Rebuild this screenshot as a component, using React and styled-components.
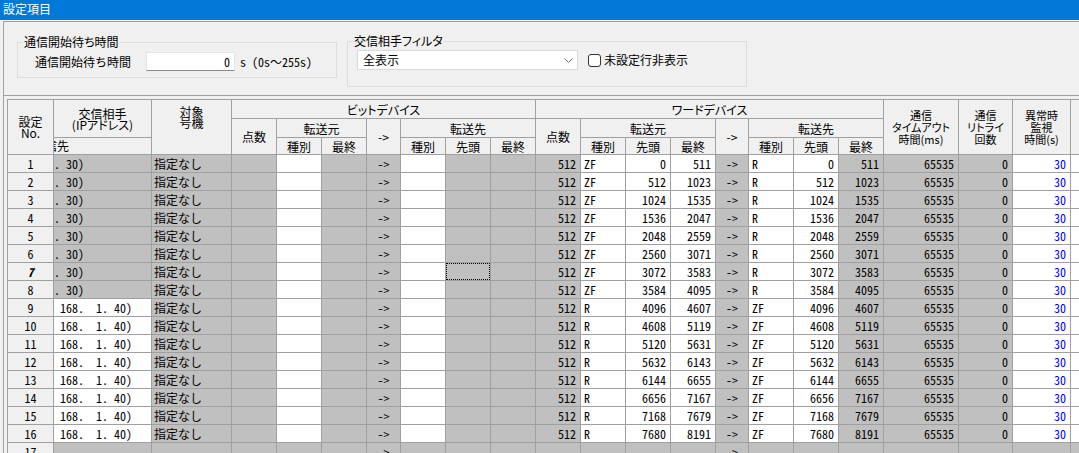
import React from "react";
import styled, { createGlobalStyle } from "styled-components";

const SANS = `"Noto Sans CJK JP", "Noto Sans", sans-serif`;
const MONO = `"Noto Sans Mono CJK JP", "Noto Sans CJK JP", monospace`;
const LINE = "#a0a0a0";
const GRAY = "#c0c0c0";
const FACE = "#f0f0f0";

const GlobalStyle = createGlobalStyle`
  html, body { margin: 0; padding: 0; overflow: hidden; background: ${FACE}; }
  body { font-family: ${SANS}; font-size: 12px; color: #000; }
  * { box-sizing: border-box; }
`;

const Window = styled.div`
  width: 1079px;
  height: 453px;
  overflow: hidden;
  background: ${FACE};
`;

const TitleBar = styled.div`
  height: 20px;
  background: #0078d7;
  color: #fff;
  font-size: 12px;
  line-height: 18px;
  padding-left: 3px;
`;

const Pane = styled.div`
  margin: 1px 0 0 3px;
  border-top: 1px solid ${LINE};
  border-left: 1px solid ${LINE};
`;

const Controls = styled.div`
  height: 73px;
  display: flex;
  align-items: flex-start;
  gap: 10px;
  padding: 12px 0 0 13px;
`;

const Group = styled.fieldset`
  margin: ${(p) => p.$mt || 0}px 0 0 0;
  padding: 0;
  width: ${(p) => p.$w}px;
  height: ${(p) => p.$h}px;
  border: 1px solid #dcdcdc;
  min-width: 0;
`;

const Legend = styled.legend`
  margin-left: 5px;
  padding: 0 1px;
  font-size: 12px;
  line-height: 14px;
  font-feature-settings: "palt";
`;

const FieldRow = styled.div`
  display: flex;
  align-items: center;
  margin: ${(p) => p.$mt}px 0 0 ${(p) => p.$ml}px;
`;

const FieldLabel = styled.span`
  width: ${(p) => p.$w}px;
  line-height: 14px;
`;

const TextBox = styled.input`
  width: 89px;
  height: 19px;
  margin: 0;
  padding: 0 4px 0 0;
  border: 1px solid #e4e4e4;
  border-bottom-color: #8a8a8a;
  background: #fff;
  font-family: ${MONO};
  font-size: 12px;
  text-align: right;
  outline: none;
`;

const Unit = styled.span`
  margin-left: 5px;
  font-family: ${MONO};
  line-height: 14px;
`;

const Select = styled.div`
  width: 221px;
  height: 20px;
  display: flex;
  align-items: center;
  padding: 0 4px 0 5px;
  background: #fff;
  border: 1px solid #d9d9d9;
  line-height: 14px;
`;

const Chevron = styled.svg`
  margin-left: auto;
  width: 9px;
  height: 5px;
`;

const CheckBox = styled.span`
  margin-left: 10px;
  width: 13px;
  height: 13px;
  border: 1px solid #333;
  border-radius: 3px;
  background: #fff;
`;

const CheckLabel = styled.span`
  margin-left: 3px;
  line-height: 14px;
`;

const GridFrame = styled.div`
  border-top: 1px solid ${LINE};
  padding: 3px 0 0 3px;
`;

const COLS = [46, 98, 80, 45, 45, 45, 34, 45, 45, 45, 45, 45, 45, 45, 33, 45, 45, 45, 75, 54, 58, 60];

const Grid = styled.div`
  display: grid;
  grid-template-columns: ${COLS.map((w) => `${w}px`).join(" ")};
  grid-template-rows: 19px 19px 17px;
  grid-auto-rows: 18px;
  width: max-content;
  border-top: 1px solid ${LINE};
  border-left: 1px solid ${LINE};
  font-family: ${MONO};
  font-size: 12px;
`;

const HeadCell = styled.div`
  grid-column: ${(p) => p.$c};
  grid-row: ${(p) => p.$r};
  background: ${FACE};
  border-right: 1px solid ${LINE};
  border-bottom: 1px solid ${LINE};
  display: flex;
  justify-content: ${(p) => (p.$left ? "flex-start" : "center")};
  align-items: ${(p) => (p.$pt != null ? "flex-start" : "center")};
  padding-top: ${(p) => p.$pt || 0}px;
  text-align: center;
  white-space: pre;
  overflow: hidden;
  font-size: ${(p) => (p.$small ? 11 : 12)}px;
  line-height: ${(p) => (p.$small ? 12 : 11)}px;
  font-family: ${SANS};
  font-feature-settings: "palt";
`;

const Shifted = styled.span`
  margin-left: ${(p) => p.$shift}px;
  line-height: 14px;
`;

const DataRow = styled.div`
  display: contents;
`;

const RowHead = styled.div`
  background: ${FACE};
  border-right: 1px solid ${LINE};
  border-bottom: 1px solid ${LINE};
  text-align: center;
  line-height: 17px;
  font-weight: ${(p) => (p.$current ? 700 : 400)};
  font-style: ${(p) => (p.$current ? "italic" : "normal")};
`;

const Cell = styled.div`
  position: relative;
  background: ${(p) => (p.$tone === "white" ? "#fff" : GRAY)};
  border-right: 1px solid ${LINE};
  border-bottom: 1px solid ${LINE};
  text-align: ${(p) => p.$align || "left"};
  padding: 0 ${(p) => (p.$align === "right" ? 4 : 0)}px 0 ${(p) => p.$pl ?? 0}px;
  line-height: 17px;
  white-space: pre;
  overflow: hidden;
  color: ${(p) => (p.$blue ? "#0000ff" : "#000")};
  ${(p) =>
    p.$focus &&
    `&::after { content: ""; position: absolute; inset: 0; border: 1px dotted #000; }`}
`;

const headers = [
  { c: "1", r: "1 / 4", t: "設定\nNo." },
  { c: "2", r: "1 / 3", t: "交信相手\n(IPアドレス)" },
  { c: "3", r: "1 / 4", t: "対象\n号機", pt: 6 },
  { c: "4 / 11", r: "1", t: "ビットデバイス" },
  { c: "4", r: "2 / 4", t: "点数" },
  { c: "5 / 7", r: "2", t: "転送元" },
  { c: "5", r: "3", t: "種別" },
  { c: "6", r: "3", t: "最終" },
  { c: "7", r: "2 / 4", t: "->" },
  { c: "8 / 11", r: "2", t: "転送先" },
  { c: "8", r: "3", t: "種別" },
  { c: "9", r: "3", t: "先頭" },
  { c: "10", r: "3", t: "最終" },
  { c: "11 / 19", r: "1", t: "ワードデバイス" },
  { c: "11", r: "2 / 4", t: "点数" },
  { c: "12 / 15", r: "2", t: "転送元" },
  { c: "12", r: "3", t: "種別" },
  { c: "13", r: "3", t: "先頭" },
  { c: "14", r: "3", t: "最終" },
  { c: "15", r: "2 / 4", t: "->" },
  { c: "16 / 19", r: "2", t: "転送先" },
  { c: "16", r: "3", t: "種別" },
  { c: "17", r: "3", t: "先頭" },
  { c: "18", r: "3", t: "最終" },
  { c: "19", r: "1 / 4", t: "通信\nタイムアウト\n時間(ms)", small: true },
  { c: "20", r: "1 / 4", t: "通信\nリトライ\n回数", small: true },
  { c: "21", r: "1 / 4", t: "異常時\n監視\n時間(s)", small: true },
  { c: "22", r: "1 / 4", t: "" },
];

function buildRow(i) {
  const n = i + 1;
  const first = i < 8;
  const start = 512 * i;
  const end = 512 * n - 1;
  return [
    { tone: first ? "gray" : "white", text: first ? ". 30)" : "168.  1. 40)", pl: first ? 0 : 6 },
    { tone: "gray", text: "指定なし", pl: 2 },
    { tone: "gray" },
    { tone: "white" },
    { tone: "gray" },
    { tone: "gray", text: "->", align: "center" },
    { tone: "white" },
    { tone: "gray", focus: n === 7 },
    { tone: "gray" },
    { tone: "gray", text: "512", align: "right" },
    { tone: "white", text: first ? "ZF" : "R", pl: 3 },
    { tone: "white", text: String(start), align: "right" },
    { tone: "white", text: String(end), align: "right" },
    { tone: "gray", text: "->", align: "center" },
    { tone: "white", text: first ? "R" : "ZF", pl: 3 },
    { tone: "white", text: String(start), align: "right" },
    { tone: "gray", text: String(end), align: "right" },
    { tone: "gray", text: "65535", align: "right" },
    { tone: "gray", text: "0", align: "right" },
    { tone: "white", text: "30", align: "right", blue: true },
    { tone: "white" },
  ];
}

const emptyRow = Array.from({ length: 21 }, (_, k) =>
  k === 5 || k === 13 ? { tone: "gray", text: "->", align: "center" } : { tone: "gray" }
);

const rows = [
  ...Array.from({ length: 16 }, (_, i) => ({ n: i + 1, cells: buildRow(i) })),
  { n: 17, cells: emptyRow },
];

export default function App() {
  return (
    <Window>
      <GlobalStyle />
      <TitleBar>設定項目</TitleBar>
      <Pane>
        <Controls>
          <Group $w={320} $h={43} $mt={1}>
            <Legend>通信開始待ち時間</Legend>
            <FieldRow $mt={3} $ml={17}>
              <FieldLabel $w={111}>通信開始待ち時間</FieldLabel>
              <TextBox readOnly value="0" />
              <Unit>s (0s〜255s)</Unit>
            </FieldRow>
          </Group>
          <Group $w={400} $h={53}>
            <Legend>交信相手フィルタ</Legend>
            <FieldRow $mt={2} $ml={9}>
              <Select>
                全表示
                <Chevron viewBox="0 0 9 5">
                  <polyline points="0.5,0.5 4.5,4.5 8.5,0.5" fill="none" stroke="#6f6f6f" strokeWidth="1" />
                </Chevron>
              </Select>
              <CheckBox />
              <CheckLabel>未設定行非表示</CheckLabel>
            </FieldRow>
          </Group>
        </Controls>
        <GridFrame>
          <Grid>
            {headers.map((h, k) => (
              <HeadCell key={k} $c={h.c} $r={h.r} $pt={h.pt} $small={h.small}>
                {h.t}
              </HeadCell>
            ))}
            <HeadCell $c="2" $r="3" $left>
              <Shifted $shift={-21}>交信先</Shifted>
            </HeadCell>
            {rows.map((row) => (
              <DataRow key={row.n}>
                <RowHead $current={row.n === 7}>{row.n}</RowHead>
                {row.cells.map((c, k) => (
                  <Cell
                    key={k}
                    $tone={c.tone}
                    $align={c.align}
                    $pl={c.pl}
                    $blue={c.blue}
                    $focus={c.focus}
                  >
                    {c.text || ""}
                  </Cell>
                ))}
              </DataRow>
            ))}
          </Grid>
        </GridFrame>
      </Pane>
    </Window>
  );
}
